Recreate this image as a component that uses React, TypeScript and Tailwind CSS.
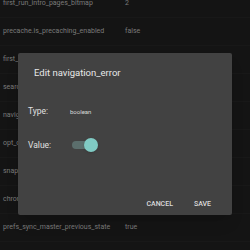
const rows: [string, string][] = [
  ["first_run_intro_pages_bitmap", "2"],
  ["precache.is_precaching_enabled", "false"],
  ["first_run_flow_complete", "true"],
  ["search_engine_choice", "1"],
  ["navigation_error", "true"],
  ["opt_out_of_sync", "false"],
  ["snapshot_last_fetched", "0"],
  ["chrome_version_last_run", "52"],
  ["prefs_sync_master_previous_state", "true"],
];

export default function App() {
  return (
    <div className="relative h-[250px] w-[250px] overflow-hidden bg-[#141414] font-['Roboto',sans-serif]">
      <div className="-mt-[10px] flex flex-col">
        {rows.map(([key, value]) => (
          <div key={key} className="flex h-[28px] items-center border-b border-[#181818] text-[7px] text-[#7a7a7a]">
            <span className="w-[125px] pl-[3px]">{key}</span>
            <span>{value}</span>
          </div>
        ))}
      </div>

      <div className="absolute left-[18px] top-[53px] flex h-[162px] w-[214px] flex-col rounded-[2px] bg-[#424242] shadow-lg">
        <p className="ml-[16px] mt-[13px] text-[9.5px] text-[#e8e8e8]">Edit navigation_error</p>
        <div className="ml-[10px] mt-[25px] flex items-center">
          <span className="w-[42px] text-[8.5px] text-[#e0e0e0]">Type:</span>
          <span className="text-[6px] text-[#d8d8d8]">boolean</span>
        </div>
        <div className="ml-[10px] mt-[20px] flex items-center">
          <span className="w-[44px] text-[8.5px] text-[#e0e0e0]">Value:</span>
          <div className="relative h-[14px] w-[26px]">
            <div className="absolute left-0 top-[3px] h-[8px] w-[22px] rounded-full bg-[#5b6e6c]" />
            <div className="absolute right-0 top-0 h-[14px] w-[14px] rounded-full bg-[#80cbc4] shadow" />
          </div>
        </div>
        <div className="mt-auto mb-[6px] mr-[21px] flex justify-end gap-[21px] text-[7px] font-medium text-[#dcdcdc]">
          <span>CANCEL</span>
          <span>SAVE</span>
        </div>
      </div>
    </div>
  );
}
